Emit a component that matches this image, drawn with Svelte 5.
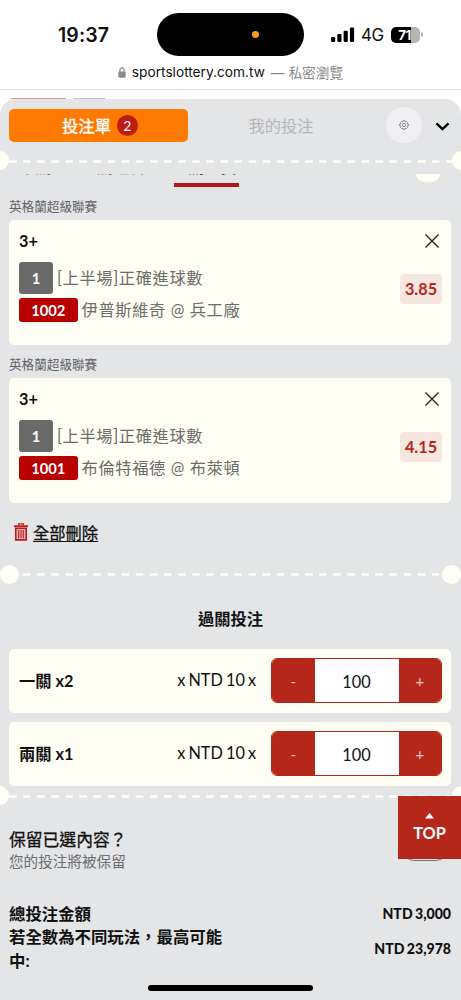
<script lang="ts">
  interface Bet {
    id: number;
    pick: string;
    leg: number;
    market: string;
    code: string;
    match: string;
    odds: string;
  }

  interface Stake {
    label: string;
    amount: number;
  }

  const league = '英格蘭超級聯賽';

  let bets: Bet[] = $state([
    { id: 1, pick: '3+', leg: 1, market: '[上半場]正確進球數', code: '1002', match: '伊普斯維奇 @ 兵工廠', odds: '3.85' },
    { id: 2, pick: '3+', leg: 1, market: '[上半場]正確進球數', code: '1001', match: '布倫特福德 @ 布萊頓', odds: '4.15' }
  ]);

  let stakes: Stake[] = $state([
    { label: '一關 x2', amount: 100 },
    { label: '兩關 x1', amount: 100 }
  ]);

  function removeBet(id: number) {
    bets = bets.filter((b) => b.id !== id);
  }

  function change(stake: Stake, step: number) {
    stake.amount = Math.max(0, stake.amount + step);
  }
</script>

{#snippet perforation(inset: boolean)}
  <div class="perforation" class:inset>
    <i class="hole"></i>
    <svg class="dashes" height="3" width="100%">
      <line x1="0" y1="1.5" x2="100%" y2="1.5" stroke="#fffffb" stroke-width="2.6" stroke-dasharray="7.5 6.6" />
    </svg>
    <i class="hole"></i>
  </div>
{/snippet}

<div class="screen">
  <header>
    <div class="status">
      <span class="time">19:37</span>
      <div class="island"><i></i></div>
      <div class="signal">
        <svg width="24" height="15" viewBox="0 0 24 15">
          <rect x="0" y="10" width="4.2" height="5" rx="1.2" />
          <rect x="6.3" y="7" width="4.2" height="8" rx="1.2" />
          <rect x="12.6" y="3.8" width="4.2" height="11.2" rx="1.2" />
          <rect x="18.9" y="0.5" width="4.2" height="14.5" rx="1.2" />
        </svg>
        <span class="network">4G</span>
        <span class="battery">71</span>
        <i class="battery-tip"></i>
      </div>
    </div>
    <div class="url">
      <svg width="8" height="11" viewBox="0 0 8 11">
        <path d="M1.9 5V3a2.1 2.1 0 0 1 4.2 0v2" fill="none" stroke="#8b8b8b" stroke-width="1.1" />
        <rect x="0.3" y="4.6" width="7.4" height="6.1" rx="1.1" fill="#8b8b8b" />
      </svg>
      <span>sportslottery.com.tw</span>
      <span class="private">— 私密瀏覽</span>
    </div>
  </header>
  <div class="behind"><i></i><i></i></div>

  <main>
    <div class="tabs">
      <button class="tab active">投注單 <span class="count">2</span></button>
      <button class="tab">我的投注</button>
      <button class="settings" aria-label="設定">
        <svg width="10" height="10" viewBox="0 0 22 22" fill="none" stroke="#74767a" stroke-width="1.8">
          <path d="M9 1.5h4l.7 2.6 2.6-1 2.6 2.6-1 2.600 2.600.7v4l-2.600.7 1 2.600-2.600 2.600-2.600-1-.7 2.600H9l-.7-2.600-2.600 1-2.600-2.600 1-2.600L1.500 13V9l2.600-.7-1-2.600L5.700 3.100l2.600 1z" />
          <circle cx="11" cy="11" r="3.6" />
        </svg>
      </button>
      <svg class="chevron" width="15" height="9" viewBox="0 0 15 9">
        <path d="M1.5 1.3L7.5 7L13.5 1.3" fill="none" stroke="#000" stroke-width="2.4" />
      </svg>
    </div>

    {@render perforation(false)}

    <!-- play types, scrolled under the header -->
    <div class="types">
      <span>單關</span>
      <span>過關組合</span>
      <span class="current">過關連賽</span>
      <i class="help"></i>
    </div>
    <div class="underline"></div>

    {#each bets as bet (bet.id)}
      <section class="bet">
        <div class="league">{league}</div>
        <div class="card">
          <div class="detail">
            <div class="pick">{bet.pick}</div>
            <div class="line"><span class="leg">{bet.leg}</span><span class="label">{bet.market}</span></div>
            <div class="line"><span class="code">{bet.code}</span><span class="label">{bet.match}</span></div>
          </div>
          <div class="side">
            <button class="close" aria-label="刪除" onclick={() => removeBet(bet.id)}>
              <svg width="14" height="14" viewBox="0 0 14 14">
                <path d="M0.5 0.5L13.5 13.5M13.5 0.5L0.5 13.5" stroke="#222" stroke-width="1.3" />
              </svg>
            </button>
            <span class="odds">{bet.odds}</span>
          </div>
        </div>
      </section>
    {/each}

    <button class="clear" onclick={() => (bets = [])}>
      <svg width="14" height="18" viewBox="0 0 14 18" fill="none" stroke="#c01818">
        <path d="M0 3.2h14" stroke-width="1.8" />
        <path d="M4.7 2.6V0.8h4.6v1.8" stroke-width="1.2" />
        <path d="M1.8 5.3v11.6h10.4V5.3z" stroke-width="1.7" />
        <path d="M4.3 7v8.500M6.100 7v8.500M7.900 7v8.500M9.700 7v8.500" stroke-width="1.1" />
      </svg>
      <span>全部刪除</span>
    </button>

    {@render perforation(true)}

    <h2>過關投注</h2>
    {#each stakes as stake}
      <div class="stake">
        <span class="name">{stake.label}</span>
        <span class="unit">x NTD 10 x</span>
        <div class="stepper">
          <button onclick={() => change(stake, -10)}>-</button>
          <span class="amount">{stake.amount}</span>
          <button onclick={() => change(stake, 10)}>+</button>
        </div>
      </div>
    {/each}

    {@render perforation(false)}

    <div class="keep">
      <div class="keep-text">
        <div class="question">保留已選內容？</div>
        <div class="hint">您的投注將被保留</div>
      </div>
      <i class="switch"></i>
    </div>

    <div class="totals">
      <div class="total"><span>總投注金額</span><b>NTD 3,000</b></div>
      <div class="total"><span>若全數為不同玩法，最高可能中:</span><b>NTD 23,978</b></div>
    </div>
  </main>

  <button class="top">
    <svg width="9" height="6" viewBox="0 0 9 6"><path d="M4.5 0L9 5.5H0z" fill="#fff" /></svg>
    TOP
  </button>
  <div class="home"></div>
</div>

<style>
  :global(body) {
    background: #fff;
  }

  .screen {
    position: relative;
    width: 461px;
    height: 1000px;
    overflow: hidden;
    display: flex;
    flex-direction: column;
    font-family: Lato, 'Noto Sans CJK TC', sans-serif;
    color: #111;
  }

  button {
    border: 0;
    padding: 0;
    margin: 0;
    background: none;
    font: inherit;
    color: inherit;
    cursor: pointer;
  }

  svg {
    display: block;
    flex-shrink: 0;
  }

  header {
    box-sizing: border-box;
    height: 90px;
    flex-shrink: 0;
    border-bottom: 1px solid #dcdcdc;
    font-family: Inter, 'Noto Sans CJK TC', sans-serif;
    padding-top: 13px;
  }

  .status {
    display: flex;
    align-items: center;
    height: 43px;
  }

  .time {
    width: 99px;
    padding-left: 58px;
    font-size: 19.5px;
    font-weight: 600;
    letter-spacing: 0.1px;
  }

  .island {
    width: 147px;
    height: 43px;
    border-radius: 22px;
    background: #000;
    display: flex;
    align-items: center;
  }

  .island i {
    width: 7px;
    height: 7px;
    border-radius: 50%;
    background: #fb9a1c;
    margin-left: 95px;
  }

  .signal {
    display: flex;
    align-items: center;
    margin-left: 27px;
  }

  .network {
    font-size: 17px;
    margin-left: 6px;
    width: 23px;
    letter-spacing: -0.6px;
  }

  .battery {
    box-sizing: border-box;
    width: 29px;
    height: 16px;
    line-height: 16px;
    padding-right: 2px;
    border-radius: 5px;
    margin-left: 7px;
    background: linear-gradient(90deg, #000 20px, #b5b5b5 20px);
    color: #fff;
    font-size: 13.5px;
    font-weight: 700;
    text-align: center;
    letter-spacing: -0.5px;
  }

  .battery-tip {
    width: 2px;
    height: 5px;
    margin-left: 1px;
    border-radius: 0 2px 2px 0;
    background: #b5b5b5;
  }

  .url {
    display: flex;
    align-items: center;
    justify-content: center;
    gap: 6px;
    height: 20px;
    margin-top: 6px;
    font-size: 13.7px;
  }

  .url .private {
    color: #8b8b8b;
  }

  .behind {
    display: flex;
    align-items: flex-end;
    gap: 8px;
    height: 9px;
    flex-shrink: 0;
    padding-left: 11px;
  }

  .behind i {
    width: 55px;
    height: 1px;
    background: #d99;
  }

  .behind i + i {
    width: 31px;
    background: #b9c2cc;
  }

  main {
    flex: 1;
    background: #e4e5e7;
    border-radius: 16px 16px 0 0;
    overflow: hidden;
    display: flex;
    flex-direction: column;
  }

  .tabs {
    display: flex;
    align-items: center;
    height: 52px;
    padding-left: 9px;
    flex-shrink: 0;
  }

  .tab {
    display: flex;
    align-items: center;
    justify-content: center;
    gap: 6px;
    width: 186px;
    height: 33px;
    font-size: 16.3px;
    color: #b5b6b8;
  }

  .tab.active {
    box-sizing: border-box;
    width: 179px;
    padding-left: 3px;
    border-radius: 5px;
    background: #ff7a00;
    color: #fff;
    -webkit-text-stroke: 0.4px #fff;
  }

  .count {
    width: 21px;
    height: 21px;
    line-height: 21px;
    border-radius: 50%;
    background: #c01b12;
    font-size: 14px;
    text-align: center;
    -webkit-text-stroke: 0;
  }

  .settings {
    display: flex;
    align-items: center;
    justify-content: center;
    width: 36px;
    height: 36px;
    margin-left: 12px;
    border-radius: 50%;
    background: #f0f0f3;
  }

  .chevron {
    margin: 2px 0 0 13px;
  }

  .perforation {
    display: flex;
    align-items: center;
    height: 19px;
    margin: 0 -10px;
    flex-shrink: 0;
  }

  .perforation.inset {
    margin: 0;
  }

  .hole {
    width: 19px;
    height: 19px;
    border-radius: 50%;
    background: #fffff5;
    flex-shrink: 0;
  }

  .dashes {
    flex: 1;
    min-width: 0;
    margin-top: 2px;
  }

  .inset .dashes {
    margin: 0 3px 0 4px;
  }

  .types {
    display: flex;
    align-items: flex-start;
    height: 9px;
    margin-top: 4px;
    padding-left: 19px;
    flex-shrink: 0;
    font-size: 16.3px;
    line-height: 17px;
    color: #777;
  }

  .types span {
    height: 1px;
    overflow: hidden;
    display: flex;
    align-items: flex-end;
    margin-right: 29px;
  }

  .types span + span {
    margin-right: 26px;
  }

  .types .current {
    color: #333;
  }

  .types .help {
    width: 24px;
    height: 8px;
    border-radius: 0 0 12px 12px;
    background: #fffff5;
    margin-left: 153px;
  }

  .underline {
    width: 65px;
    height: 4px;
    flex-shrink: 0;
    background: #b5161c;
    margin: 0 0 9px 174px;
  }

  .league {
    height: 24px;
    line-height: 21px;
    padding-left: 9px;
    font-size: 12.6px;
    color: #606164;
  }

  .bet {
    height: 157.7px;
    flex-shrink: 0;
  }

  .card {
    display: flex;
    justify-content: space-between;
    box-sizing: border-box;
    height: 125px;
    margin: 0 10px 0 9px;
    padding: 11px 9px 0 10px;
    border-radius: 5px;
    background: #fffef5;
  }

  .pick {
    height: 21px;
    line-height: 20px;
    margin-bottom: 10px;
    font-size: 16.3px;
    font-weight: 700;
  }

  .line {
    display: flex;
    align-items: center;
    gap: 4px;
    font-size: 16.3px;
    letter-spacing: 0.6px;
    color: #6d6d6a;
    height: 32px;
    white-space: nowrap;
  }

  .label {
    padding-bottom: 2px;
  }

  .leg, .code {
    box-sizing: border-box;
    border-radius: 3px;
    color: #fff;
    font-size: 14.7px;
    font-weight: 700;
    letter-spacing: 0;
    text-align: center;
  }

  .leg {
    width: 34px;
    height: 32px;
    line-height: 32px;
    background: #6a6a6a;
  }

  .code {
    width: 58.5px;
    height: 24px;
    line-height: 24px;
    background: #b80000;
  }

  .side {
    display: flex;
    flex-direction: column;
    align-items: flex-end;
  }

  .close {
    margin: 3px 3px 0 0;
  }

  .odds {
    width: 42px;
    height: 30px;
    line-height: 30px;
    margin-top: 26px;
    border-radius: 4px;
    background: #f7e6df;
    color: #b5281e;
    font-size: 16.3px;
    font-weight: 700;
    text-align: center;
  }

  .clear {
    display: flex;
    align-items: center;
    align-self: flex-start;
    gap: 5px;
    height: 24px;
    margin: 9px 0 20.5px 14px;
    flex-shrink: 0;
    font-size: 16.3px;
    -webkit-text-stroke: 0.3px #111;
    text-decoration: underline;
    text-underline-offset: 2px;
  }

  h2 {
    margin: 23px 0 18px;
    height: 24px;
    line-height: 24px;
    flex-shrink: 0;
    font-size: 16.3px;
    font-weight: 700;
    text-align: center;
  }

  .stake {
    display: flex;
    align-items: center;
    box-sizing: border-box;
    height: 64px;
    margin: 0 10px 9px 9px;
    padding: 0 9px 0 10px;
    border-radius: 5px;
    background: #fffef5;
    flex-shrink: 0;
    font-size: 16.3px;
  }

  .stake + .stake {
    margin-bottom: 0;
  }

  .name {
    flex: 1;
    padding-bottom: 2px;
    font-weight: 700;
  }

  .unit {
    margin: 0 15px 3px 0;
    word-spacing: -1.1px;
  }

  .stepper {
    box-sizing: border-box;
    display: flex;
    width: 171px;
    height: 45px;
    border: 1px solid #b5261b;
    border-radius: 6px;
    overflow: hidden;
    background: #fff;
  }

  .stepper button {
    width: 42.5px;
    background: #b5261b;
    color: #f3c9c2;
    font-size: 15px;
  }

  .amount {
    flex: 1;
    line-height: 45px;
    text-align: center;
  }

  .keep {
    display: flex;
    justify-content: space-between;
    align-items: flex-start;
    height: 97px;
    flex-shrink: 0;
    padding: 24px 13px 0 9px;
    box-sizing: border-box;
  }

  .question {
    font-size: 16.8px;
    line-height: 22px;
    -webkit-text-stroke: 0.3px #111;
  }

  .hint {
    font-size: 14.6px;
    line-height: 22px;
    color: #6c6d6f;
  }

  .switch {
    box-sizing: border-box;
    width: 46px;
    height: 24px;
    margin-top: 8px;
    border: 1px solid #77787a;
    border-radius: 12px;
  }

  .totals {
    padding: 0 10px 0 9px;
    font-size: 16.4px;
    line-height: 23.5px;
    font-weight: 700;
  }

  .total {
    display: flex;
    align-items: center;
    justify-content: space-between;
  }

  .total span {
    width: 216px;
  }

  .total b {
    font-size: 14.1px;
    word-spacing: -1px;
  }

  .top {
    position: absolute;
    right: 0;
    top: 796px;
    display: flex;
    flex-direction: column;
    align-items: center;
    justify-content: center;
    gap: 4px;
    width: 63px;
    height: 63px;
    background: #b5261b;
    color: #fff;
    font-size: 16.3px;
    line-height: 20px;
    font-weight: 700;
  }

  .home {
    position: absolute;
    left: 148px;
    bottom: 9px;
    width: 165px;
    height: 6px;
    border-radius: 3px;
    background: #000;
  }
</style>
